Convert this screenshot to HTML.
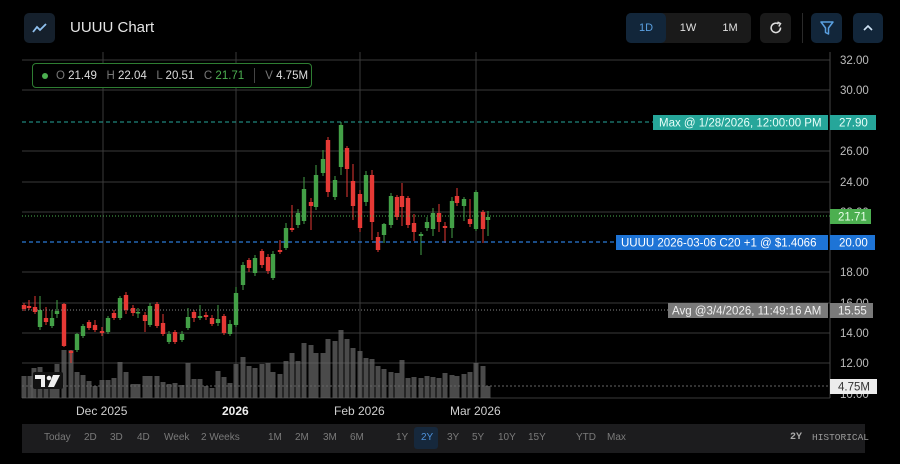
<!DOCTYPE html>
<html><head><meta charset="utf-8"><style>
*{margin:0;padding:0;box-sizing:border-box}
body{width:900px;height:464px;background:#000;overflow:hidden;font-family:"Liberation Sans",sans-serif;color:#ddd;position:relative}
.abs{position:absolute}
.btn{position:absolute;top:13px;height:30px;border-radius:5px;display:flex;align-items:center;justify-content:center}
.bb{position:absolute;top:432px;font-size:10px;color:#7a7a7a}
</style></head><body>
<div class="btn" style="left:24px;width:31px;background:#15202c">
<svg width="16" height="12" viewBox="0 0 16 12"><path d="M1 10 L5 5 L8 8 L14 2" stroke="#8fc0ee" stroke-width="1.8" fill="none"/></svg></div>
<div class="abs" style="left:70px;top:19px;font-size:15px;color:#e6e6e6">UUUU Chart</div>
<div class="btn" style="left:626px;width:125px;background:#1a1a1a"></div>
<div class="btn" style="left:626px;width:40px;background:#12263a;color:#5aa0e0;font-size:11px">1D</div>
<div class="btn" style="left:668px;width:40px;color:#e0e0e0;font-size:11px">1W</div>
<div class="btn" style="left:710px;width:40px;color:#e0e0e0;font-size:11px">1M</div>
<div class="btn" style="left:760px;width:31px;background:#1a1a1a">
<svg width="14" height="14" viewBox="0 0 14 14"><path d="M11.5 6.5 A4.7 4.7 0 1 1 9.5 3" stroke="#ddd" stroke-width="1.5" fill="none"/><path d="M8.5 1 L11.5 2.6 L9.8 5.5" stroke="#ddd" stroke-width="1.5" fill="none"/></svg></div>
<div class="abs" style="left:802px;top:13px;width:1px;height:30px;background:#2a2a2a"></div>
<div class="btn" style="left:811px;width:31px;background:#12263a">
<svg width="14" height="15" viewBox="0 0 14 15"><path d="M1 1 H13 L8.5 7 V13 L5.5 11.5 V7 Z" stroke="#5aa0e0" stroke-width="1.5" fill="none" stroke-linejoin="round"/></svg></div>
<div class="btn" style="left:853px;width:30px;background:#12263a">
<svg width="12" height="8" viewBox="0 0 12 8"><path d="M2 6 L6 2 L10 6" stroke="#cfe3f5" stroke-width="1.6" fill="none"/></svg></div>

<svg class="abs" style="left:0;top:0" width="900" height="464" id="ch">
<g stroke="#3a3a3a" stroke-width="1">
<line x1="22" y1="60" x2="830" y2="60"/><line x1="22" y1="90" x2="830" y2="90"/><line x1="22" y1="151" x2="830" y2="151"/><line x1="22" y1="182" x2="830" y2="182"/><line x1="22" y1="212" x2="830" y2="212"/><line x1="22" y1="272" x2="830" y2="272"/><line x1="22" y1="303" x2="830" y2="303"/><line x1="22" y1="333" x2="830" y2="333"/><line x1="22" y1="363" x2="830" y2="363"/><line x1="22" y1="398" x2="830" y2="398"/>
<line x1="103" y1="52" x2="103" y2="398"/><line x1="236" y1="52" x2="236" y2="398"/><line x1="360" y1="52" x2="360" y2="398"/><line x1="476" y1="52" x2="476" y2="398"/>
<line x1="830" y1="52" x2="830" y2="398" stroke="#444"/>
</g>
<g id="vol" fill="#6a6a6a" fill-opacity="0.7"></g>
<g id="cnd"></g>
<line x1="22" y1="122" x2="655" y2="122" stroke="#26a69a" stroke-dasharray="4,3"/>
<line x1="22" y1="216" x2="830" y2="216" stroke="#4caf50" stroke-dasharray="1,2"/>
<line x1="22" y1="242" x2="616" y2="242" stroke="#2a7ad6" stroke-dasharray="4,3" stroke-width="1.2"/>
<line x1="22" y1="310" x2="668" y2="310" stroke="#888" stroke-dasharray="1,2"/>
<line x1="22" y1="386" x2="830" y2="386" stroke="#666" stroke-dasharray="2,2"/>
<g font-family="Liberation Sans,sans-serif" font-size="11.5" fill="#bdbdbd">
<text x="840" y="64">32.00</text><text x="840" y="94">30.00</text><text x="840" y="155">26.00</text><text x="840" y="186">24.00</text><text x="840" y="216">22.00</text><text x="840" y="276">18.00</text><text x="840" y="307">16.00</text><text x="840" y="337">14.00</text><text x="840" y="367">12.00</text><text x="840" y="398">10.00</text>
</g>
<g font-family="Liberation Sans,sans-serif" font-size="11.5">
<rect x="653" y="115" width="175" height="15" fill="#26a69a"/><text x="659" y="126.5" fill="#e8fff9">Max @ 1/28/2026, 12:00:00 PM</text>
<rect x="830" y="115" width="46" height="15" fill="#26a69a"/><text x="839" y="126.5" fill="#e8fff9">27.90</text>
<rect x="830" y="209" width="41" height="15" fill="#4caf50"/><text x="838" y="220.5" fill="#eaffea">21.71</text>
<rect x="616" y="235" width="212" height="15" fill="#1e74d6"/><text x="621" y="246.5" fill="#fff">UUUU 2026-03-06 C20 +1 @ $1.4066</text>
<rect x="830" y="235" width="45" height="15" fill="#1e74d6"/><text x="839" y="246.5" fill="#fff">20.00</text>
<rect x="668" y="303" width="160" height="15" fill="#7a7a7a"/><text x="672" y="314.5" fill="#f0f0f0">Avg @3/4/2026, 11:49:16 AM</text>
<rect x="830" y="303" width="43" height="15" fill="#7a7a7a"/><text x="838" y="314.5" fill="#f0f0f0">15.55</text>
<rect x="830" y="379" width="47" height="15" fill="#ececec"/><text x="838" y="390.5" fill="#333">4.75M</text>
</g>
<g font-family="Liberation Sans,sans-serif" font-size="12" fill="#cfcfcf">
<text x="76" y="415">Dec 2025</text><text x="222" y="415" font-weight="bold" fill="#eee">2026</text><text x="334" y="415">Feb 2026</text><text x="450" y="415">Mar 2026</text>
</g>
<g transform="translate(33,372)"><rect x="0" y="0" width="30" height="17" rx="2" fill="#111"/><path d="M2 3 H12 V15 H8 V7 H2 Z" fill="#eee"/><circle cx="16" cy="6" r="2.3" fill="#eee"/><path d="M20 3 H27 L21 15 H15 Z" fill="#eee"/></g>
</svg>

<div class="abs" style="left:32px;top:63px;width:280px;height:25px;border:1px solid #2e7d32;border-radius:4px;background:#000;font-size:11.5px;display:flex;align-items:center;padding-left:9px;white-space:pre">
<span style="width:6px;height:6px;border-radius:3px;background:#4caf50;display:inline-block;margin-right:8px"></span><span style="color:#777">O </span><span style="color:#ddd">21.49</span><span style="color:#777">   H </span><span style="color:#ddd">22.04</span><span style="color:#777">   L </span><span style="color:#ddd">20.51</span><span style="color:#777">   C </span><span style="color:#4caf50">21.71</span><span style="display:inline-block;width:1px;height:15px;background:#444;margin:0 10px"></span><span style="color:#777">V </span><span style="color:#ddd">4.75M</span></div>

<div class="abs" style="left:22px;top:424px;width:843px;height:29px;background:#1c1c1e"></div>
<div class="abs" style="left:414px;top:427px;width:24px;height:22px;background:#16283c;border-radius:3px"></div>
<span class="bb" style="left:44px">Today</span><span class="bb" style="left:84px">2D</span><span class="bb" style="left:110px">3D</span><span class="bb" style="left:137px">4D</span><span class="bb" style="left:164px">Week</span><span class="bb" style="left:201px">2 Weeks</span>
<span class="bb" style="left:268px">1M</span><span class="bb" style="left:295px">2M</span><span class="bb" style="left:323px">3M</span><span class="bb" style="left:350px">6M</span>
<span class="bb" style="left:396px">1Y</span><span class="bb" style="left:421px;color:#4d90d8">2Y</span><span class="bb" style="left:447px">3Y</span><span class="bb" style="left:472px">5Y</span><span class="bb" style="left:498px">10Y</span><span class="bb" style="left:528px">15Y</span><span class="bb" style="left:576px">YTD</span><span class="bb" style="left:607px">Max</span>
<span class="bb" style="left:790px;font-family:'Liberation Mono',monospace;color:#aaa;font-weight:bold">2Y</span><span class="bb" style="left:812px;font-family:'Liberation Mono',monospace;color:#999;font-size:9.5px">HISTORICAL</span>

<script>
var V=[[24,376],[30,376],[34,368],[40,367],[46,372],[52,372],[57,364],[64,350],[71,350],[77,372],[83,375],[89,381],[95,386],[102,380],[108,380],[114,378],[120,362],[126,372],[133,384],[138,384],[145,376],[150,376],[157,376],[163,382],[169,384],[175,383],[182,385],[188,363],[194,379],[200,379],[206,386],[212,388],[218,371],[224,377],[230,383],[236,364],[243,357],[249,366],[255,368],[262,364],[268,363],[273,372],[280,374],[286,361],[292,353],[298,361],[304,343],[311,345],[316,353],[323,353],[328,339],[335,341],[341,330],[347,339],[353,348],[360,351],[366,358],[372,359],[378,366],[384,369],[391,372],[397,373],[402,360],[408,378],[414,377],[421,378],[427,376],[433,377],[439,378],[445,373],[452,375],[457,376],[464,374],[470,372],[476,363],[483,366],[488,386]];
var C=[[24,305,309,303,311],[29,306,308,300,310],[35,307,312,296,314],[40,327,310,296,330],[46,318,322,307,325],[52,326,318,310,328],[57,314,311,300,318],[64,304,346,303,347],[71,351,353,350,363],[77,350,334,333,352],[83,336,326,324,338],[89,322,328,320,330],[95,325,330,320,332],[102,331,333,327,336],[108,332,318,316,334],[114,313,318,310,320],[120,318,298,296,320],[126,295,310,292,314],[133,308,313,305,316],[138,313,312,308,318],[145,315,321,312,332],[150,325,306,303,327],[157,304,326,302,328],[163,323,334,314,336],[169,342,334,331,344],[175,332,342,330,344],[182,340,334,331,342],[188,328,317,308,330],[194,312,318,310,322],[200,318,316,305,320],[206,315,317,312,320],[212,318,324,315,326],[218,323,319,305,326],[224,316,333,314,335],[230,334,324,320,336],[236,325,293,287,327],[243,285,265,262,290],[249,260,268,258,272],[255,273,258,255,276],[262,251,265,249,268],[268,257,271,254,274],[273,278,254,251,280],[280,250,252,240,254],[286,248,228,223,250],[292,228,230,205,232],[298,225,213,209,228],[304,221,189,177,224],[311,202,206,198,230],[316,207,175,165,210],[323,173,159,150,176],[328,140,192,137,197],[335,197,180,176,200],[341,167,125,122,175],[347,148,169,146,197],[353,181,206,164,220],[360,194,228,190,232],[366,202,175,171,206],[372,175,222,170,240],[378,237,250,232,252],[384,235,224,223,243],[391,225,196,193,228],[397,197,217,195,220],[402,196,207,183,226],[408,198,225,196,228],[414,223,232,214,241],[421,236,234,232,255],[427,228,222,217,231],[433,229,213,208,236],[439,213,222,204,232],[445,226,228,222,243],[452,228,201,197,238],[457,196,203,188,206],[464,206,199,197,221],[470,219,224,199,227],[476,229,192,190,231],[483,212,229,210,243],[488,220,217,211,236]];
var s='';V.forEach(function(v){s+='<rect x="'+(v[0]-2.5)+'" y="'+v[1]+'" width="5" height="'+(398-v[1])+'"/>'});
document.getElementById('vol').innerHTML=s;s='';
C.forEach(function(c){var g=c[2]<c[1],col=g?'#43a047':'#e53935',t=Math.min(c[1],c[2]),h=Math.max(Math.abs(c[1]-c[2]),1.5);
s+='<line x1="'+c[0]+'" y1="'+c[3]+'" x2="'+c[0]+'" y2="'+c[4]+'" stroke="'+col+'"/><rect x="'+(c[0]-2.2)+'" y="'+t+'" width="4.4" height="'+h+'" fill="'+col+'"/>'});
document.getElementById('cnd').innerHTML=s;
</script>
</body></html>
